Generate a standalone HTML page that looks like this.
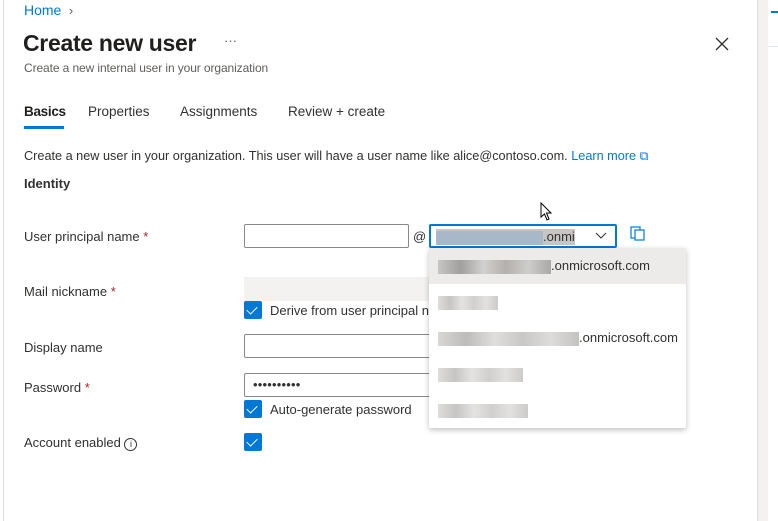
<!DOCTYPE html>
<html><head><meta charset="utf-8"><style>
body{margin:0;width:778px;height:521px;overflow:hidden;background:#fff;font-family:"Liberation Sans",sans-serif;color:#323130;position:relative}
.a{position:absolute;white-space:nowrap}
.inp{position:absolute;border:1px solid #8a8886;border-radius:2px;background:#fff;box-sizing:border-box}
.cb{position:absolute;width:18px;height:18px;background:#0078d4;border-radius:2px}
.cb::after{content:"";position:absolute;left:5px;top:3px;width:5px;height:9px;border:solid #fff;border-width:0 1.5px 1.5px 0;transform:rotate(45deg)}
.blur{display:inline-block;height:14px;vertical-align:middle;background:linear-gradient(90deg,#c8c6c4,#a19f9d 20%,#d2d0ce 40%,#b3b0ad 60%,#cfcdcb 80%,#aaa8a6)}
.it{position:absolute;left:429px;width:257px;height:36px;line-height:36px;padding-left:9px;box-sizing:border-box;font-size:13px}
</style></head><body>
<div class="a" style="left:3px;top:0;width:1px;height:521px;background:#e1dfdd"></div>
<div class="a" style="left:757px;top:0;width:10px;height:521px;background:#f3f2f1;border-left:1px solid #e1dfdd"></div>
<div class="a" style="left:771px;top:11px;width:7px;height:2px;background:#0078d4"></div>
<div class="a" style="left:768px;top:46px;width:10px;height:1px;background:#deecf9"></div>
<div class="a" style="left:24px;top:2px;font-size:14px;color:#0078d4">Home <span style="color:#605e5c;font-size:13px">&nbsp;›</span></div>
<div class="a" style="left:23px;top:30px;font-size:23px;font-weight:bold;color:#201f1e;letter-spacing:-0.3px">Create new user</div>
<div class="a" style="left:224px;top:33px;font-size:13px;color:#605e5c">···</div>
<svg class="a" style="left:715px;top:37px" width="14" height="14"><path d="M1 1L13 13M13 1L1 13" stroke="#323130" stroke-width="1.3"/></svg>
<div class="a" style="left:24px;top:61px;font-size:12px;color:#605e5c;letter-spacing:-0.1px">Create a new internal user in your organization</div>
<div class="a" style="left:24px;top:104px;font-size:13.5px;font-weight:bold;color:#201f1e;letter-spacing:-0.3px">Basics</div>
<div class="a" style="left:24px;top:126px;width:40px;height:3px;background:#0078d4"></div>
<div class="a" style="left:88px;top:104px;font-size:13.5px">Properties</div>
<div class="a" style="left:180px;top:104px;font-size:13.5px">Assignments</div>
<div class="a" style="left:288px;top:104px;font-size:13.5px">Review + create</div>
<div class="a" style="left:24px;top:149px;font-size:12.7px">Create a new user in your organization. This user will have a user name like alice@contoso.com. <span style="color:#0078d4">Learn more ⧉</span></div>
<div class="a" style="left:24px;top:176px;font-size:13px;font-weight:bold">Identity</div>
<div class="a" style="left:24px;top:229px;font-size:13px">User principal name <span style="color:#a4262c">*</span></div>
<div class="inp" style="left:244px;top:224px;width:165px;height:24px"></div>
<div class="a" style="left:413px;top:229px;font-size:13px">@</div>
<div class="inp" style="left:429px;top:224px;width:188px;height:24px;border:2px solid #0078d4;overflow:hidden"><div class="a" style="left:5px;top:3px;font-size:13px;background:#c8c6c4"><span class="blur" style="width:107px;background:#a8b8c8"></span>.onmi</div><svg class="a" style="left:164px;top:6px" width="12" height="8"><path d="M1 1L6 6L11 1" stroke="#323130" fill="none"/></svg></div>
<svg class="a" style="left:630px;top:226px" width="15" height="15"><rect x="1" y="1" width="9" height="11" fill="none" stroke="#0078d4" stroke-width="1.2"/><rect x="5" y="4" width="9" height="10" fill="#fff" stroke="#0078d4" stroke-width="1.2"/></svg>
<div class="a" style="left:24px;top:284px;font-size:13px">Mail nickname <span style="color:#a4262c">*</span></div>
<div class="a" style="left:244px;top:277px;width:190px;height:24px;background:#f3f2f1"></div>
<div class="cb" style="left:244px;top:301px"></div>
<div class="a" style="left:270px;top:303px;font-size:13px">Derive from user principal n</div>
<div class="a" style="left:24px;top:340px;font-size:13px">Display name</div>
<div class="inp" style="left:244px;top:334px;width:200px;height:24px"></div>
<div class="a" style="left:24px;top:380px;font-size:13px">Password <span style="color:#a4262c">*</span></div>
<div class="inp" style="left:244px;top:373px;width:200px;height:24px"><span class="a" style="left:8px;top:3px;font-size:13px;letter-spacing:0.2px">••••••••••</span></div>
<div class="cb" style="left:244px;top:400px"></div>
<div class="a" style="left:270px;top:402px;font-size:13px">Auto-generate password</div>
<div class="a" style="left:24px;top:435px;font-size:13px">Account enabled <span style="display:inline-block;width:11px;height:11px;border:1px solid #323130;border-radius:50%;font-size:9px;line-height:11px;text-align:center;vertical-align:0px">i</span></div>
<div class="cb" style="left:244px;top:433px"></div>
<div class="a" style="left:429px;top:248px;width:257px;height:180px;background:#fff;box-shadow:0 2px 6px rgba(0,0,0,.25);border-radius:2px"></div>
<div class="it" style="top:248px;background:#edebe9"><span class="blur" style="width:113px"></span>.onmicrosoft.com</div>
<div class="it" style="top:284px"><span class="blur" style="width:60px;opacity:.6"></span></div>
<div class="it" style="top:320px"><span class="blur" style="width:141px;opacity:.7"></span>.onmicrosoft.com</div>
<div class="it" style="top:356px"><span class="blur" style="width:85px;opacity:.6"></span></div>
<div class="it" style="top:392px"><span class="blur" style="width:90px;opacity:.6"></span></div>
<svg class="a" style="left:540px;top:202px" width="14" height="20"><path d="M1 1L1 15L4.5 12L7 18L9 17L6.5 11L11 11Z" fill="#fff" stroke="#000"/></svg>
</body></html>
